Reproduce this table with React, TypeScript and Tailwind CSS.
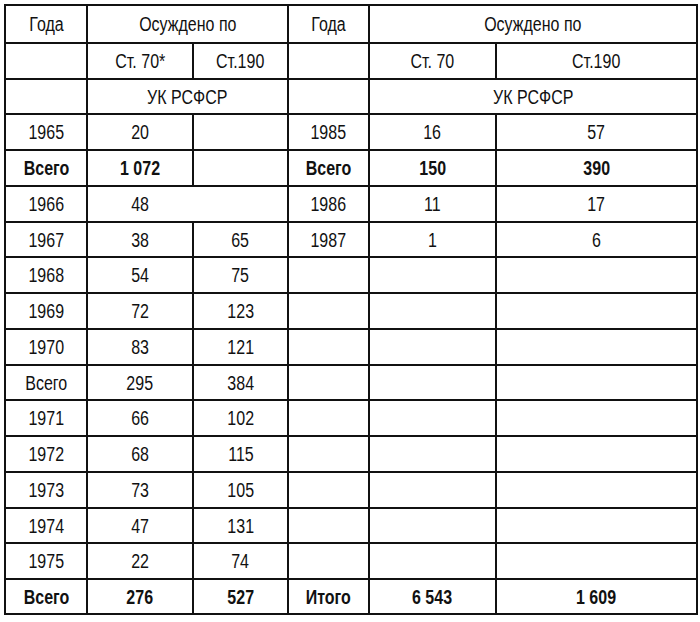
import React from "react";

type Row = {
  c: string[];
  bold?: boolean;
  h: string;
  noMid?: boolean;
};

const rows: Row[] = [
  { c: ["1965", "20", "", "1985", "16", "57"], h: "h-[36px]" },
  { c: ["Всего", "1 072", "", "Всего", "150", "390"], bold: true, h: "h-[36px]" },
  { c: ["1966", "48", "", "1986", "11", "17"], h: "h-[36px]", noMid: true },
  { c: ["1967", "38", "65", "1987", "1", "6"], h: "h-[35px]" },
  { c: ["1968", "54", "75", "", "", ""], h: "h-[36px]" },
  { c: ["1969", "72", "123", "", "", ""], h: "h-[36px]" },
  { c: ["1970", "83", "121", "", "", ""], h: "h-[36px]" },
  { c: ["Всего", "295", "384", "", "", ""], h: "h-[35px]" },
  { c: ["1971", "66", "102", "", "", ""], h: "h-[36px]" },
  { c: ["1972", "68", "115", "", "", ""], h: "h-[36px]" },
  { c: ["1973", "73", "105", "", "", ""], h: "h-[36px]" },
  { c: ["1974", "47", "131", "", "", ""], h: "h-[35px]" },
  { c: ["1975", "22", "74", "", "", ""], h: "h-[36px]" },
  { c: ["Всего", "276", "527", "Итого", "6 543", "1 609"], bold: true, h: "h-[35px]" },
];

function T({ children }: { children?: React.ReactNode }) {
  return <span className="inline-block scale-x-[0.8] whitespace-nowrap">{children}</span>;
}

export default function App() {
  const cell = "border-2 border-[#111] text-center align-middle p-0";
  return (
    <div
      className="w-[700px] h-[622px] bg-white pl-[4px] pt-[4px] text-[#111] text-[20px] leading-none"
      style={{ fontFamily: '"Liberation Sans", Arial, sans-serif' }}
    >
      <table className="border-collapse table-fixed w-[692px]">
        <colgroup>
          <col className="w-[82px]" />
          <col className="w-[106px]" />
          <col className="w-[95px]" />
          <col className="w-[81px]" />
          <col className="w-[127px]" />
          <col className="w-[201px]" />
        </colgroup>
        <tbody>
          <tr className="h-[38px]">
            <td className={cell}><T>Года</T></td>
            <td className={cell} colSpan={2}><T>Осуждено по</T></td>
            <td className={cell}><T>Года</T></td>
            <td className={cell} colSpan={2}><T>Осуждено по</T></td>
          </tr>
          <tr className="h-[36px]">
            <td className={cell}></td>
            <td className={cell}><T>Ст. 70*</T></td>
            <td className={cell}><T>Ст.190</T></td>
            <td className={cell}></td>
            <td className={cell}><T>Ст. 70</T></td>
            <td className={cell}><T>Ст.190</T></td>
          </tr>
          <tr className="h-[35px]">
            <td className={cell}></td>
            <td className={cell} colSpan={2}><T>УК РСФСР</T></td>
            <td className={cell}></td>
            <td className={cell} colSpan={2}><T>УК РСФСР</T></td>
          </tr>
          {rows.map((r, i) => (
            <tr key={i} className={`${r.h} ${r.bold ? "font-bold" : ""}`}>
              {r.c.map((v, j) => {
                let cls = cell;
                if (r.noMid && j === 1) cls += " border-r-0";
                if (r.noMid && j === 2) cls += " border-l-0";
                return (
                  <td key={j} className={cls}>
                    {v ? <T>{v}</T> : null}
                  </td>
                );
              })}
            </tr>
          ))}
        </tbody>
      </table>
    </div>
  );
}
